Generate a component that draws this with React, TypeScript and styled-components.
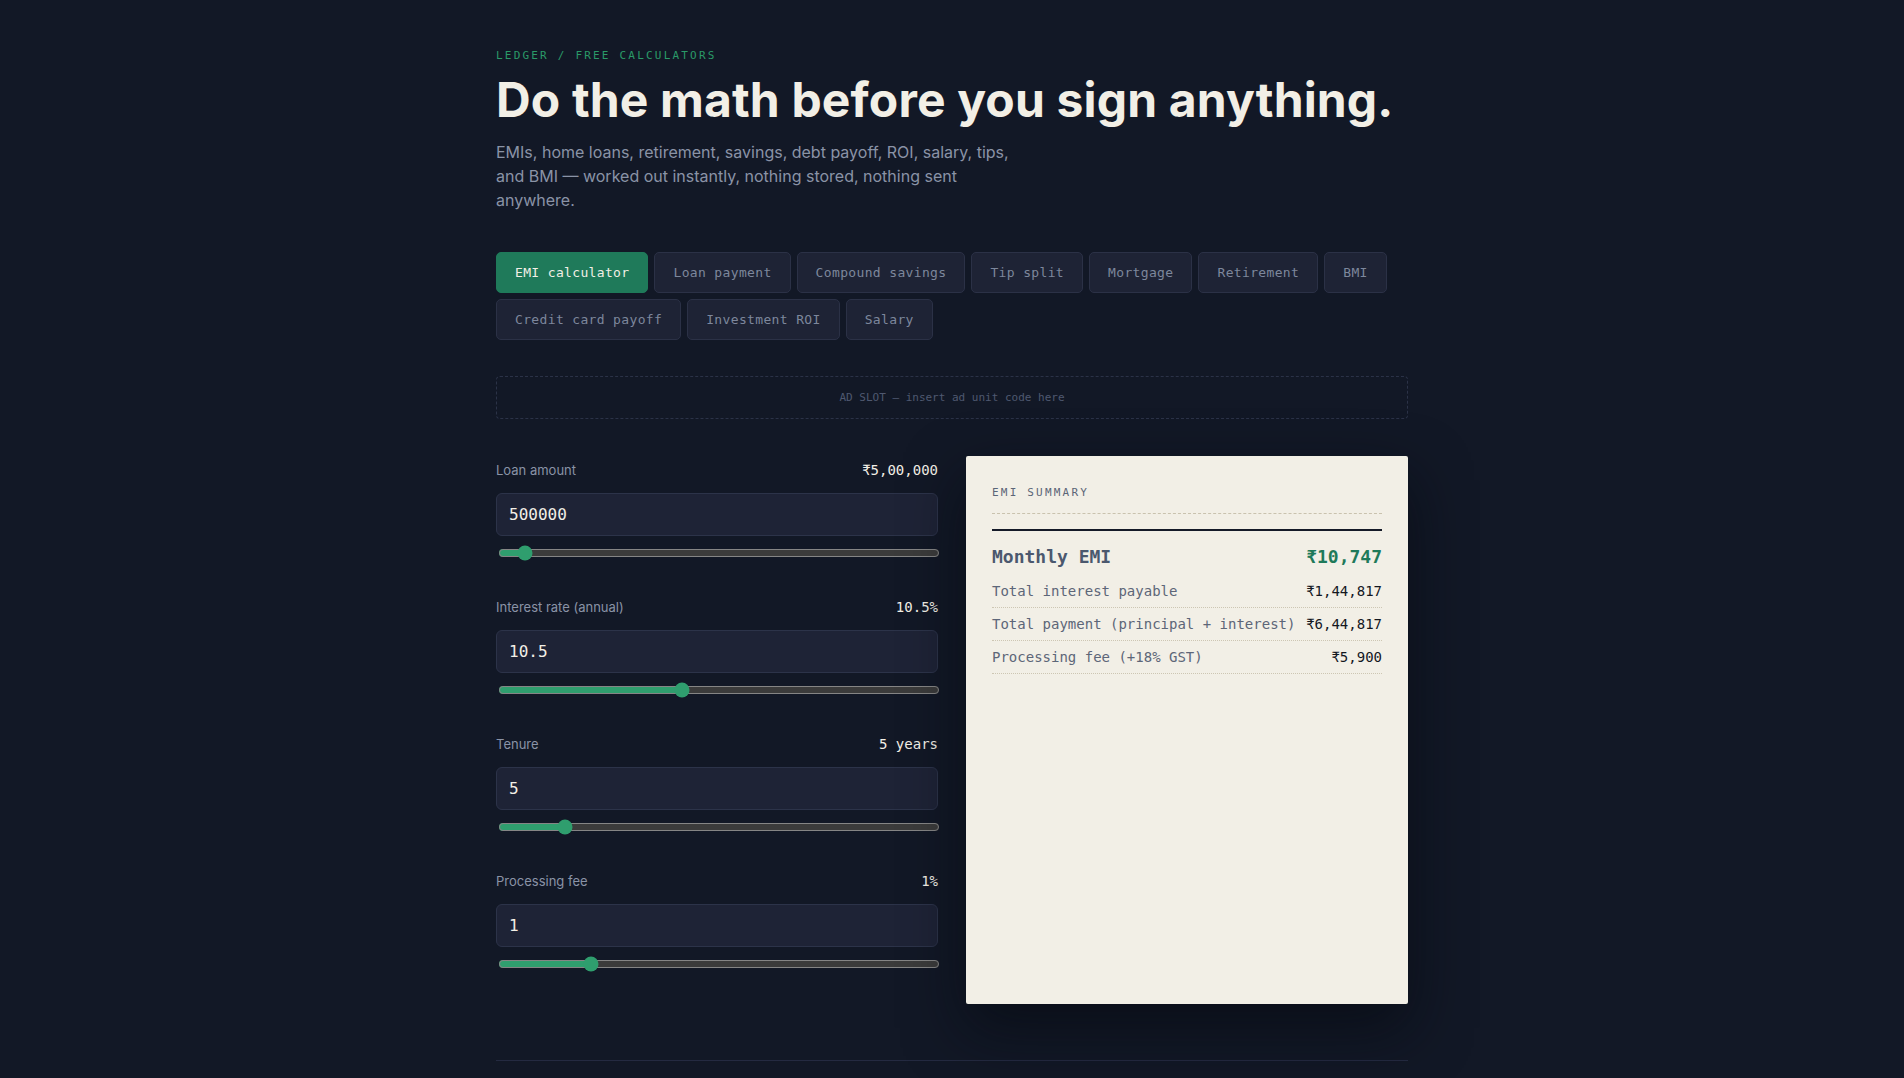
import React, { useState } from 'react';
import styled, { createGlobalStyle } from 'styled-components';

const mono = `"DejaVu Sans Mono", "Liberation Mono", monospace`;
const sans = `Inter, "Noto Sans", sans-serif`;

const GlobalStyle = createGlobalStyle`
  html, body {
    margin: 0;
    padding: 0;
    background: #121826;
    color: #f2efe6;
    font-family: ${sans};
  }
  * {
    box-sizing: border-box;
  }
`;

const Page = styled.main`
  max-width: 912px;
  margin: 0 auto;
  padding: 48px 0 0;
`;

const Crumb = styled.div`
  font-family: ${mono};
  font-size: 11px;
  line-height: 16px;
  letter-spacing: 0.2em;
  color: #2a9a68;
  text-transform: uppercase;
`;

const Title = styled.h1`
  margin: 10px 0 13px;
  font-family: ${sans};
  font-weight: 700;
  font-size: 48px;
  line-height: 1.1;
  letter-spacing: 0.15px;
  color: #f2efe6;
`;

const Lede = styled.p`
  margin: 0;
  max-width: 520px;
  font-size: 16px;
  line-height: 24px;
  color: #8a93a6;
`;

const Tabs = styled.nav`
  display: flex;
  flex-wrap: wrap;
  gap: 6px;
  margin-top: 40px;
`;

const Tab = styled.button<{ $active?: boolean }>`
  font-family: ${mono};
  font-size: 13px;
  line-height: 17px;
  letter-spacing: 0.35px;
  padding: 11px 18px;
  border-radius: 5px;
  border: 1px solid ${({ $active }) => ($active ? '#1f7a5a' : '#2b3146')};
  background: ${({ $active }) => ($active ? '#1f7a5a' : '#1e2335')};
  color: ${({ $active }) => ($active ? '#f2efe6' : '#7d879c')};
  cursor: pointer;
`;

const AdSlot = styled.div`
  margin-top: 36px;
  height: 43px;
  padding-top: 1px;
  border: 1px dashed #2b3247;
  border-radius: 4px;
  display: flex;
  align-items: center;
  justify-content: center;
  font-family: ${mono};
  font-size: 11px;
  color: #4f5870;
`;

const Layout = styled.section`
  display: grid;
  grid-template-columns: 1fr 1fr;
  gap: 28px;
  margin-top: 37px;
  align-items: stretch;
`;

const Fields = styled.div`
  display: flex;
  flex-direction: column;
`;

const Field = styled.div`
  display: flex;
  flex-direction: column;
  padding-bottom: 33px;
`;

const FieldHead = styled.div`
  display: flex;
  justify-content: space-between;
  align-items: center;
  height: 28px;
  margin-bottom: 9px;
`;

const FieldLabel = styled.label`
  font-size: 13px;
  color: #8a93a6;
`;

const FieldValue = styled.span`
  font-family: ${mono};
  font-size: 14px;
  color: #f2efe6;
`;

const NumberInput = styled.input`
  height: 43px;
  width: 100%;
  padding: 1px 12px 0;
  background: #1e2336;
  border: 1px solid #2c3349;
  border-radius: 6px;
  font-family: ${mono};
  font-size: 16px;
  color: #f2efe6;
  outline: none;
`;

const Range = styled.input`
  display: block;
  width: 100%;
  height: 14px;
  margin: 10px 0 0 2px;
  accent-color: #2f9e6e;
  color-scheme: dark;
`;

const Receipt = styled.aside`
  background: #f2efe6;
  border-radius: 2px;
  padding: 28px 26px;
  box-shadow: 0 24px 60px rgba(5, 8, 15, 0.6);
  color: #14171f;
`;

const ReceiptHead = styled.div`
  font-family: ${mono};
  font-size: 11px;
  line-height: 16px;
  letter-spacing: 0.2em;
  color: #5b6577;
  padding-top: 1px;
  padding-bottom: 12px;
  border-bottom: 1px dashed #c9c2ae;
`;

const ReceiptList = styled.div`
  margin-top: 15px;
  border-top: 2px solid #151a28;
`;

const Row = styled.div<{ $big?: boolean }>`
  display: flex;
  justify-content: space-between;
  align-items: center;
  font-family: ${mono};
  font-size: ${({ $big }) => ($big ? '18px' : '14px')};
  font-weight: ${({ $big }) => ($big ? 700 : 400)};
  line-height: ${({ $big }) => ($big ? '26px' : '18px')};
  padding: ${({ $big }) => ($big ? '13px 0 5px' : '7px 0')};
  border-bottom: ${({ $big }) => ($big ? 'none' : '1px dotted #cdc6b3')};
`;

const RowLabel = styled.span<{ $big?: boolean }>`
  color: ${({ $big }) => ($big ? '#4b586e' : '#5d6678')};
`;

const RowValue = styled.span<{ $accent?: boolean }>`
  color: ${({ $accent }) => ($accent ? '#1f7a5a' : '#14171f')};
`;

const Footer = styled.footer`
  margin-top: 56px;
  border-top: 1px solid #242a41;
  height: 40px;
`;

const tabs = [
  'EMI calculator',
  'Loan payment',
  'Compound savings',
  'Tip split',
  'Mortgage',
  'Retirement',
  'BMI',
  'Credit card payoff',
  'Investment ROI',
  'Salary',
];

function inr(n: number) {
  const s = Math.round(n).toString();
  if (s.length <= 3) return '₹' + s;
  const last = s.slice(-3);
  const rest = s.slice(0, -3).replace(/\B(?=(\d{2})+(?!\d))/g, ',');
  return '₹' + rest + ',' + last;
}

export default function App() {
  const [active, setActive] = useState(0);
  const [amount, setAmount] = useState(500000);
  const [rate, setRate] = useState(10.5);
  const [years, setYears] = useState(5);
  const [fee, setFee] = useState(1);

  const r = rate / 12 / 100;
  const n = years * 12;
  const emi = r === 0 ? amount / n : (amount * r * Math.pow(1 + r, n)) / (Math.pow(1 + r, n) - 1);
  const total = emi * n;
  const interest = total - amount;
  const feeTotal = amount * (fee / 100) * 1.18;

  const fields = [
    { label: 'Loan amount', shown: inr(amount), value: amount, set: setAmount, min: 50000, max: 10000000, step: 10000 },
    { label: 'Interest rate (annual)', shown: `${rate}%`, value: rate, set: setRate, min: 1, max: 24, step: 0.1 },
    { label: 'Tenure', shown: `${years} years`, value: years, set: setYears, min: 1, max: 30, step: 1 },
    { label: 'Processing fee', shown: `${fee}%`, value: fee, set: setFee, min: 0, max: 5, step: 0.1 },
  ];

  return (
    <>
      <GlobalStyle />
      <Page>
        <Crumb>Ledger / Free calculators</Crumb>
        <Title>Do the math before you sign anything.</Title>
        <Lede>
          EMIs, home loans, retirement, savings, debt payoff, ROI, salary, tips, and BMI — worked out
          instantly, nothing stored, nothing sent anywhere.
        </Lede>

        <Tabs>
          {tabs.map((t, i) => (
            <Tab key={t} $active={i === active} onClick={() => setActive(i)}>
              {t}
            </Tab>
          ))}
        </Tabs>

        <AdSlot>AD SLOT — insert ad unit code here</AdSlot>

        <Layout>
          <Fields>
            {fields.map((f) => (
              <Field key={f.label}>
                <FieldHead>
                  <FieldLabel>{f.label}</FieldLabel>
                  <FieldValue>{f.shown}</FieldValue>
                </FieldHead>
                <NumberInput
                  type="text"
                  value={String(f.value)}
                  onChange={(e) => {
                    const v = Number(e.target.value);
                    if (!Number.isNaN(v)) f.set(v);
                  }}
                />
                <Range
                  type="range"
                  min={f.min}
                  max={f.max}
                  step={f.step}
                  value={f.value}
                  onChange={(e) => f.set(Number(e.target.value))}
                />
              </Field>
            ))}
          </Fields>

          <Receipt>
            <ReceiptHead>EMI SUMMARY</ReceiptHead>
            <ReceiptList>
              <Row $big>
                <RowLabel $big>Monthly EMI</RowLabel>
                <RowValue $accent>{inr(emi)}</RowValue>
              </Row>
              <Row>
                <RowLabel>Total interest payable</RowLabel>
                <RowValue>{inr(interest)}</RowValue>
              </Row>
              <Row>
                <RowLabel>Total payment (principal + interest)</RowLabel>
                <RowValue>{inr(total)}</RowValue>
              </Row>
              <Row>
                <RowLabel>Processing fee (+18% GST)</RowLabel>
                <RowValue>{inr(feeTotal)}</RowValue>
              </Row>
            </ReceiptList>
          </Receipt>
        </Layout>

        <Footer />
      </Page>
    </>
  );
}
